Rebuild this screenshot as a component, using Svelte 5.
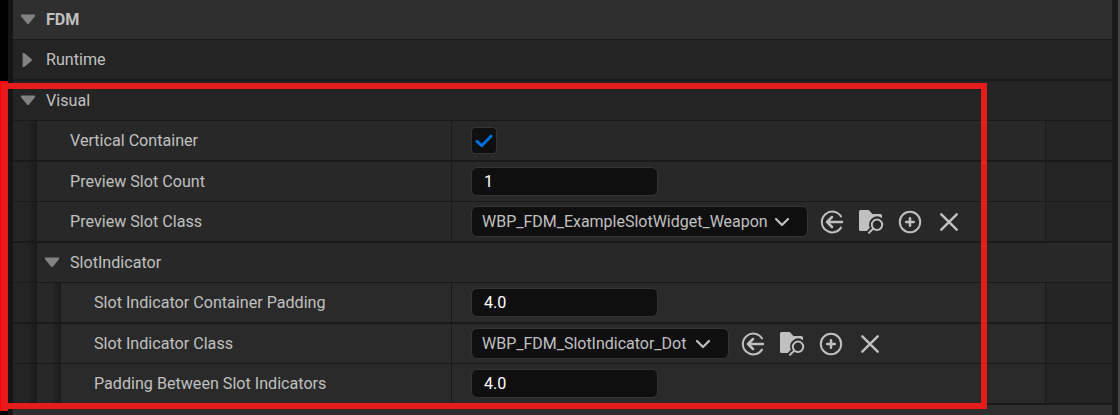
<script>
	let rows = $state([
		{ label: 'FDM', kind: 'category', depth: 0, open: true },
		{ label: 'Runtime', kind: 'group', depth: 0, open: false },
		{ label: 'Visual', kind: 'group', depth: 0, open: true },
		{ label: 'Vertical Container', kind: 'bool', depth: 1, value: true },
		{ label: 'Preview Slot Count', kind: 'number', depth: 1, value: '1' },
		{ label: 'Preview Slot Class', kind: 'class', depth: 1, value: 'WBP_FDM_ExampleSlotWidget_Weapon', width: 337 },
		{ label: 'SlotIndicator', kind: 'group', depth: 1, open: true },
		{ label: 'Slot Indicator Container Padding', kind: 'number', depth: 2, value: '4.0' },
		{ label: 'Slot Indicator Class', kind: 'class', depth: 2, value: 'WBP_FDM_SlotIndicator_Dot', width: 258 },
		{ label: 'Padding Between Slot Indicators', kind: 'number', depth: 2, value: '4.0' },
		{ label: '', kind: 'category', depth: 0 }
	]);

	function isHeader(row) {
		return row.kind === 'category' || row.kind === 'group';
	}
</script>

<div class="editor">
	<div class="panel">
		{#each rows as row, i}
			<div class="row {row.kind} depth-{row.depth}" class:thick={i % 2 === 1}>
				{#each { length: row.depth } as _}
					<div class="indent"></div>
				{/each}
				{#if isHeader(row)}
					<div class="title">
						{#if row.label}
							<button class="expander" aria-label="Toggle {row.label}" onclick={() => (row.open = !row.open)}>
								<svg width="16" height="16" viewBox="0 0 16 16" class:closed={!row.open}>
									<path d="M1.3 2.6H14.7L15.2 3.9L9 11.5Q8 12.5 7 11.5L.8 3.9Z" />
								</svg>
							</button>
							<span class="text">{row.label}</span>
						{/if}
					</div>
				{:else}
					<div class="name"><span class="text">{row.label}</span></div>
					<div class="value">
						{#if row.kind === 'bool'}
							<button class="check" aria-label={row.label} onclick={() => (row.value = !row.value)}>
								{#if row.value}
									<svg width="18" height="14" viewBox="0 0 18 14"><path d="M2 7.3L6.7 11.7L16 2.2" /></svg>
								{/if}
							</button>
						{:else if row.kind === 'number'}
							<div class="field"><span class="text">{row.value}</span></div>
						{:else}
							<div class="combo" style="width: {row.width}px">
								<span class="text">{row.value}</span>
								<svg width="16" height="10" viewBox="0 0 16 10"><path d="M2 2L8 8L14 2" /></svg>
							</div>
							{@render actions()}
						{/if}
					</div>
					<div class="reset"></div>
				{/if}
			</div>
		{/each}
	</div>
	<div class="scroll-gutter"></div>
	<div class="highlight"></div>
	<div class="highlight-edge"></div>
</div>

{#snippet actions()}
	<div class="actions">
		<!-- use selected asset -->
		<svg viewBox="0 0 26 26">
			<path class="line" d="M22 7.4A10.4 10.4 0 1 0 22 18.6" />
			<path class="bold" d="M23 13H8M13 8L8 13L13 18" />
		</svg>
		<!-- browse to asset -->
		<svg viewBox="0 0 26 26">
			<path class="solid" d="M2.5 1H10Q11 1 11.5 1.7L14.4 5H22.5Q24 5 24 6.5V9.2A8 8 0 0 0 11.8 18.7L8.8 22H2.5Q1 22 1 20.5V2.5Q1 1 2.5 1Z" />
			<circle class="line" cx="19" cy="15.8" r="5.2" />
			<path class="line" d="M15.2 19.6L11 23.8" />
		</svg>
		<!-- create new -->
		<svg viewBox="0 0 26 26">
			<circle class="line" cx="13" cy="13" r="10.2" />
			<path class="bold" d="M13 9.2V16.8M9.2 13H16.8" />
		</svg>
		<!-- clear -->
		<svg viewBox="0 0 26 26">
			<path class="bold" d="M5.3 5.3L20.7 20.7M20.7 5.3L5.3 20.7" />
		</svg>
	</div>
{/snippet}

<style>
	:global(body) {
		background: #000;
	}

	.editor {
		position: relative;
		display: flex;
		box-sizing: border-box;
		width: 1120px;
		height: 415px;
		padding-left: 8px;
		overflow: hidden;
		font-family: Roboto, sans-serif;
		font-size: 17px;
		color: #c0c0c0;
	}

	.panel {
		flex: 1;
		border-left: 5px solid #151515;
		background: #1a1a1a;
	}

	.scroll-gutter {
		width: 6px;
		background: #1a1a1a;
		border-right: 2px solid #464646;
	}

	.row {
		display: flex;
		height: 39px;
		border-bottom: 1px solid #1a1a1a;
		background: #242424;
	}

	.row.thick {
		border-bottom-width: 2px;
	}

	.row.category {
		background: #2f2f2f;
		font-weight: 700;
	}

	.depth-1 {
		background: #282828;
	}

	.depth-2 {
		background: #2a2a2a;
	}

	.row.group {
		background: #242424;
	}

	.row.group.depth-1 {
		background: #282828;
	}

	.indent {
		flex: none;
		width: 24px;
		background: linear-gradient(to right, #242424 60%, #1a1a1a);
	}

	.indent + .indent {
		background: linear-gradient(to right, #282828 60%, #1a1a1a);
	}

	.title {
		display: flex;
		align-items: center;
		padding-left: 7px;
	}

	.expander {
		display: flex;
		margin: 0 10px 0 0;
		padding: 0;
		border: none;
		background: none;
		cursor: pointer;
	}

	.expander path {
		fill: #828282;
	}

	.expander .closed {
		transform: rotate(-90deg);
	}

	.name {
		box-sizing: border-box;
		display: flex;
		align-items: center;
		width: 415px;
		padding-left: 33px;
		border-right: 1px solid #1a1a1a;
	}

	.depth-2 .name {
		width: 391px;
	}

	/* slightly condensed, like the editor's own Roboto */
	.text {
		display: inline-block;
		padding-bottom: 2px;
		line-height: 20px;
		white-space: nowrap;
		transform: scaleX(0.948);
		transform-origin: left;
	}

	.value {
		flex: 1;
		display: flex;
		align-items: center;
		padding-left: 19px;
	}

	.reset {
		width: 66px;
		border-left: 1px solid #1a1a1a;
		background: #242424;
	}

	.check,
	.field,
	.combo {
		box-sizing: border-box;
		display: flex;
		align-items: center;
		border: 1px solid #353535;
		background: #0f0f0f;
	}

	.check {
		justify-content: center;
		width: 26px;
		height: 27px;
		padding: 0;
		border-radius: 4px;
		cursor: pointer;
	}

	.check svg {
		flex: none;
	}

	.check path {
		fill: none;
		stroke: #0070e0;
		stroke-width: 3;
		stroke-linecap: round;
		stroke-linejoin: round;
	}

	.field {
		width: 187px;
		height: 29px;
		padding-left: 12px;
		border-radius: 6px;
		color: #fff;
	}

	.combo {
		height: 31px;
		padding: 0 17px 0 10px;
		border-radius: 6px;
	}

	.combo .text {
		flex: 1;
		width: 0;
		transform: scaleX(0.94);
	}

	.combo svg {
		flex: none;
	}

	.combo path {
		fill: none;
		stroke: #c0c0c0;
		stroke-width: 2.2;
		stroke-linecap: round;
		stroke-linejoin: round;
	}

	.actions {
		display: flex;
		gap: 13px;
		margin-left: 11px;
	}

	.actions svg {
		width: 26px;
		height: 26px;
	}

	.actions .line,
	.actions .bold {
		fill: none;
		stroke: #c0c0c0;
		stroke-width: 2;
		stroke-linecap: round;
		stroke-linejoin: round;
	}

	.actions .bold {
		stroke-width: 2.5;
	}

	.actions .solid {
		fill: #c0c0c0;
	}

	/* callout drawn over the property rows */
	.highlight {
		position: absolute;
		left: 2px;
		top: 83px;
		box-sizing: border-box;
		width: 985px;
		height: 326px;
		border: 6px solid #e71b1b;
	}

	.highlight-edge {
		position: absolute;
		left: 0;
		top: 81px;
		width: 8px;
		height: 330px;
		box-sizing: border-box;
		border: solid #f00;
		border-width: 2px 0 0 1px;
		background: #e71b1b;
	}
</style>
